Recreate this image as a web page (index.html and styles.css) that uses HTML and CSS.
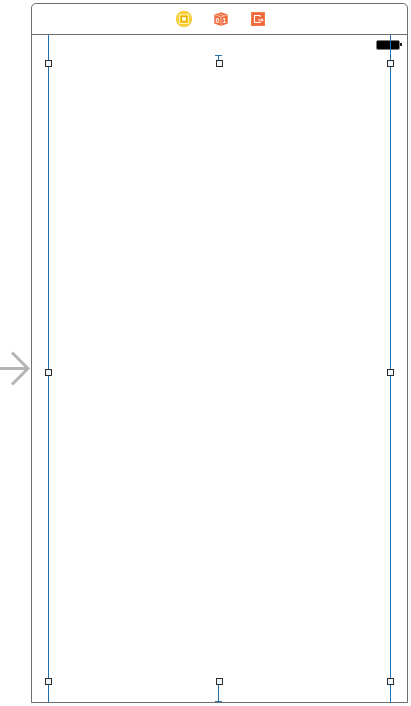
FILE: index.html
```html
<!DOCTYPE html>
<html lang="en">
<head>
    <meta charset="UTF-8">
    <meta name="viewport" content="width=device-width, initial-scale=1.0">
    <title>Storyboard scene</title>
    <link rel="stylesheet" href="styles.css">
</head>
<body>

<div class="stage">
    <div class="entry-col">
        <svg class="entry-arrow" width="31" height="40" viewBox="0 0 31 40">
            <path d="M0 20.5H28" fill="none" stroke="#b4b4b4" stroke-width="3"/>
            <path d="M12 4.5L28 20.5L12 36.5" fill="none" stroke="#b4b4b4" stroke-width="3"/>
        </svg>
    </div>

    <div class="scene">
        <div class="scene-bar">
            <svg class="bar-icon" width="16" height="16" viewBox="0 0 16 16">
                <circle cx="8" cy="8" r="8" fill="#f5c211"/>
                <circle cx="8" cy="8" r="6.5" fill="none" stroke="#fbd85a" stroke-width="1"/>
                <rect x="3.5" y="3.5" width="9" height="9" fill="#f7c916" stroke="#fdf0b0" stroke-width="1.2"/>
                <rect x="5.5" y="5.5" width="5" height="5" fill="#fff6cf" stroke="#e3ab00" stroke-width="1"/>
            </svg>
            <svg class="bar-icon" width="14" height="14" viewBox="0 0 14 14">
                <path d="M7 0.3L13.7 2.6V11.4L7 14L0.3 11.4V2.6Z" fill="#f0693a"/>
                <path d="M0.5 2.7L7 5L13.5 2.7M7 5V14" fill="none" stroke="#fbc7ae" stroke-width="0.9"/>
                <path d="M3.6 1.4L10.4 3.9" fill="none" stroke="#fbc7ae" stroke-width="0.9"/>
                <text class="cube-digit" x="3.6" y="10.6">0</text>
                <text class="cube-digit" x="10.4" y="11">1</text>
            </svg>
            <svg class="bar-icon bar-icon-exit" width="14" height="14" viewBox="0 0 14 14">
                <rect width="14" height="14" fill="#f47a4a"/>
                <rect x="1" y="1" width="12" height="12" fill="#f0693a"/>
                <path d="M9 5V3.5H3.5V10.5H9V9.5" fill="none" stroke="#fff" stroke-width="1.1"/>
                <path d="M7 8H12.5M11 6.5V9.5" fill="none" stroke="#fff" stroke-width="1.1"/>
            </svg>
        </div>

        <div class="canvas">
            <div class="battery"><span class="battery-nub"></span></div>

            <div class="guide guide-left"></div>
            <div class="guide guide-right"></div>

            <div class="strut strut-top"></div>
            <div class="strut strut-bottom"></div>

            <div class="handle col-left row-top"></div>
            <div class="handle col-mid row-top"></div>
            <div class="handle col-right row-top"></div>
            <div class="handle col-left row-mid"></div>
            <div class="handle col-right row-mid"></div>
            <div class="handle col-left row-bottom"></div>
            <div class="handle col-mid row-bottom"></div>
            <div class="handle col-right row-bottom"></div>
        </div>
    </div>
</div>

</body>
</html>
```

FILE: styles.css
```css
body {
    margin: 0;
    padding: 0;
    background-color: #ffffff;
    overflow: hidden;
}
.stage {
    display: flex;
    height: 706px;
    padding-top: 3px;
    box-sizing: border-box;
}
.entry-col {
    width: 31px;
    height: 700px;
    display: flex;
    align-items: center;
    flex-shrink: 0;
}
.entry-arrow {
    display: block;
    margin-top: 30px;
}
.scene {
    width: 377px;
    height: 700px;
    box-sizing: border-box;
    border: 1px solid #6c6c6c;
    border-radius: 5px 5px 0 0;
    display: flex;
    flex-direction: column;
}
.scene-bar {
    height: 30px;
    flex-shrink: 0;
    border-bottom: 1px solid #6c6c6c;
    display: flex;
    justify-content: center;
    align-items: center;
    gap: 22px;
    padding-left: 2px;
}
.bar-icon {
    display: block;
}
.bar-icon-exit {
    margin-left: 1px;
}
.cube-digit {
    font-family: "Liberation Sans", sans-serif;
    font-size: 6.5px;
    font-weight: bold;
    fill: #ffffff;
    text-anchor: middle;
}
.canvas {
    flex: 1;
    position: relative;
}
.battery {
    position: absolute;
    left: 344px;
    top: 5px;
    width: 24px;
    height: 10px;
    box-sizing: border-box;
    background-color: #000000;
    border: 1px solid #7d7d7d;
    border-radius: 2px;
}
.battery-nub {
    position: absolute;
    right: -3px;
    top: 2px;
    width: 2px;
    height: 3px;
    background-color: #222222;
}
.guide {
    position: absolute;
    top: 0;
    bottom: 0;
    width: 1px;
    background-color: #1a72bb;
}
.guide-left {
    left: 16px;
}
.guide-right {
    left: 358px;
}
.strut {
    position: absolute;
    left: 186px;
    width: 1px;
    background-color: #2a6fa8;
}
.strut-top {
    top: 20px;
    height: 6px;
}
.strut-top::before,
.strut-bottom::after {
    content: "";
    position: absolute;
    left: -3px;
    width: 7px;
    height: 1px;
    background-color: #2a6fa8;
}
.strut-top::before {
    top: 0;
}
.strut-bottom {
    top: 650px;
    bottom: 0;
}
.strut-bottom::after {
    bottom: 0;
}
.handle {
    position: absolute;
    width: 7px;
    height: 7px;
    box-sizing: border-box;
    background-color: #eef5fb;
    border: 1px solid #2b2b2b;
}
.col-left {
    left: 13px;
}
.col-mid {
    left: 184px;
}
.col-right {
    left: 355px;
}
.row-top {
    top: 25px;
}
.row-mid {
    top: 334px;
}
.row-bottom {
    top: 643px;
}
```
